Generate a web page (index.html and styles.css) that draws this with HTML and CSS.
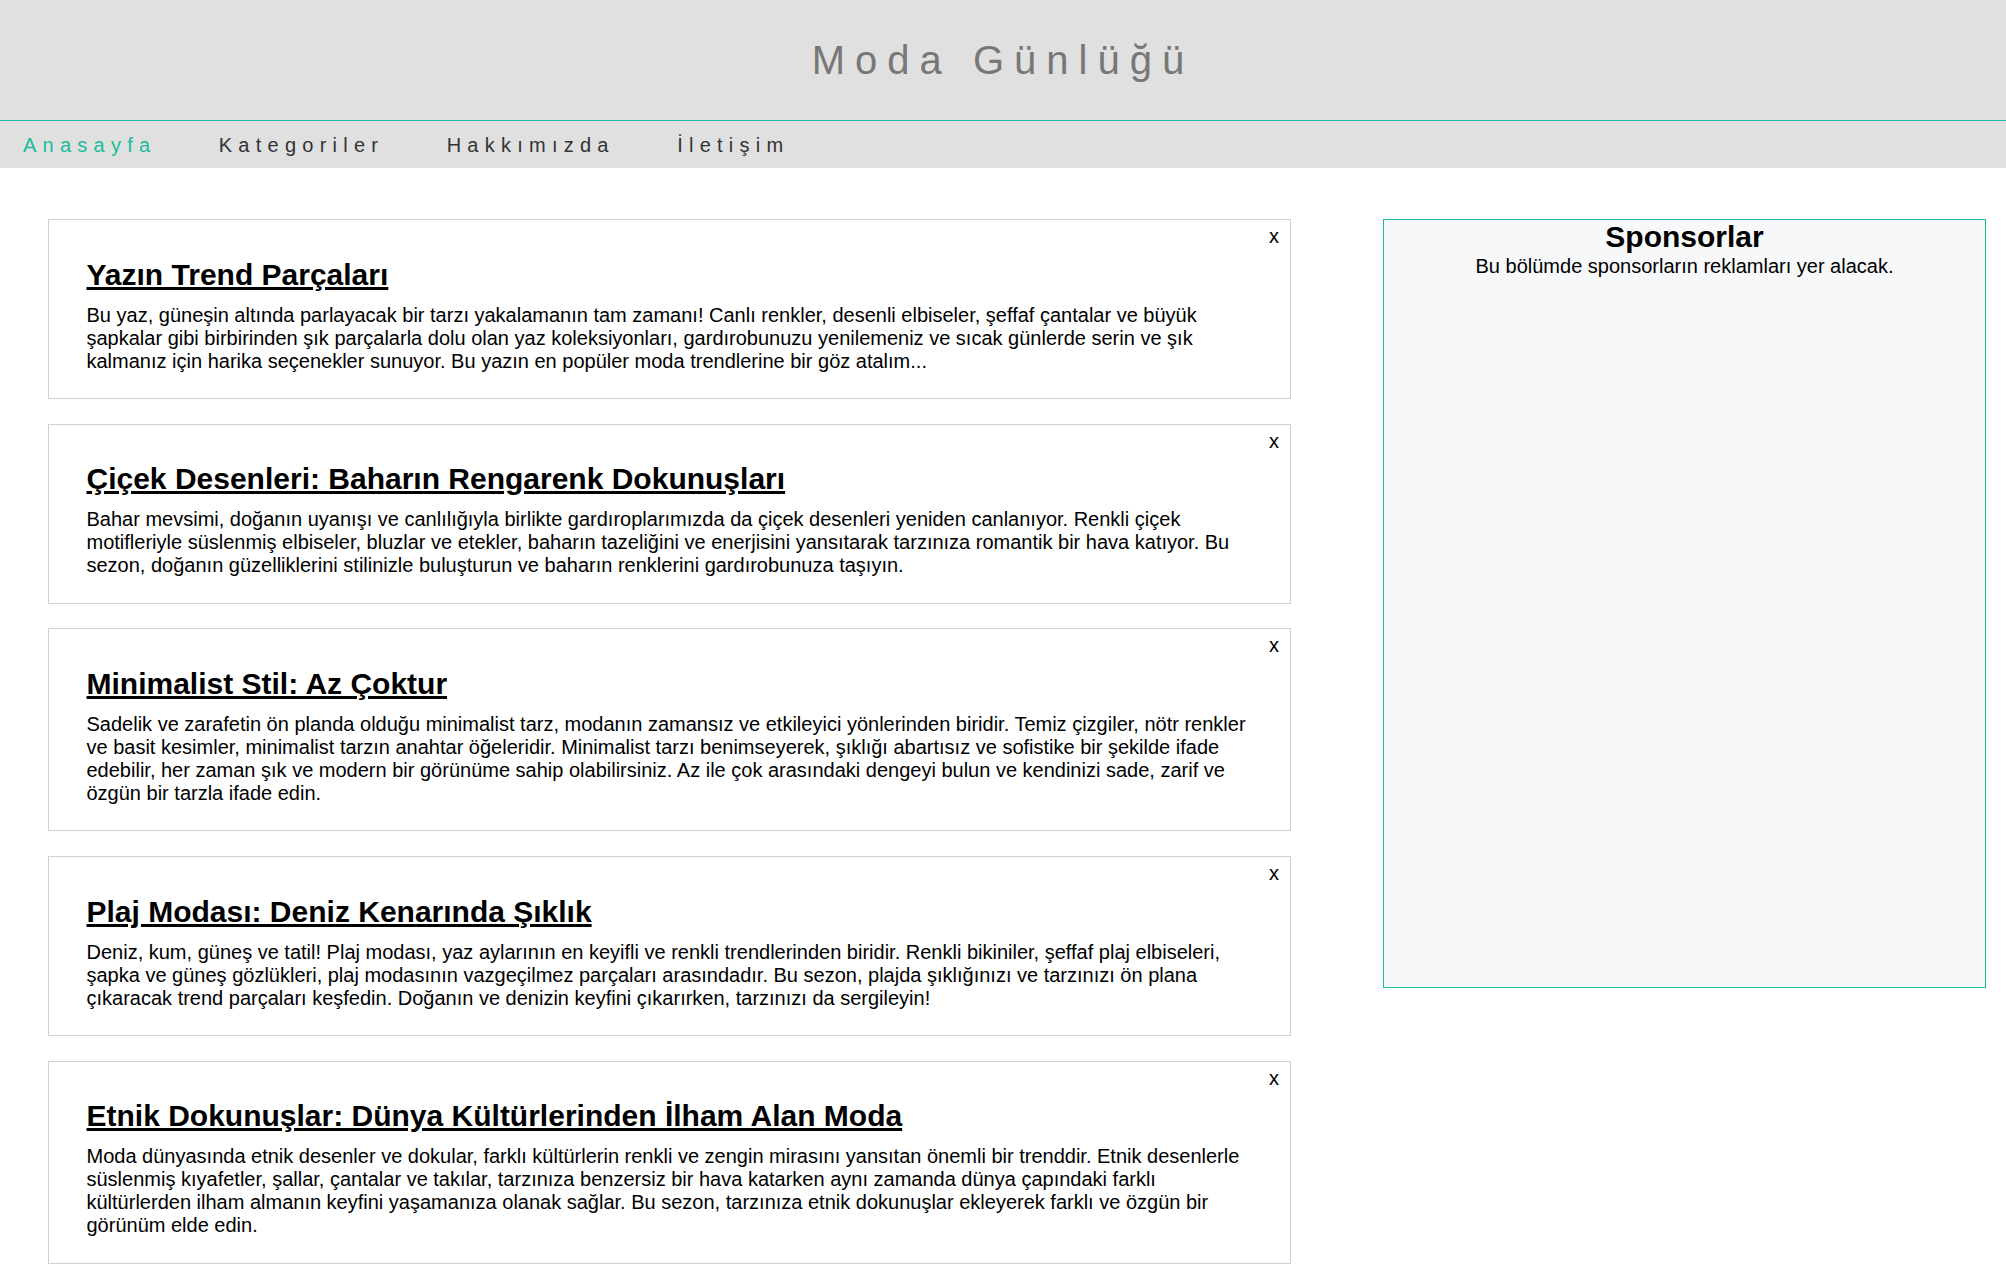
FILE: index.html
```html
<!DOCTYPE html>
<html lang="tr">
<head>
<meta charset="utf-8">
<title>Moda Günlüğü</title>
<link rel="stylesheet" href="styles.css">
</head>
<body>
<header class="site-header">
  <h1 class="site-title">Moda Günlüğü</h1>
</header>
<nav class="nav">
  <a class="nav-link active" href="#">Anasayfa</a>
  <a class="nav-link" href="#">Kategoriler</a>
  <a class="nav-link" href="#">Hakkımızda</a>
  <a class="nav-link" href="#">İletişim</a>
</nav>
<div class="layout">
  <main class="posts">
    <article class="card">
      <span class="close">x</span>
      <h2 class="card-title"><a href="#">Yazın Trend Parçaları</a></h2>
      <p class="card-text">Bu yaz, güneşin altında parlayacak bir tarzı yakalamanın tam zamanı! Canlı renkler, desenli elbiseler, şeffaf çantalar ve büyük şapkalar gibi birbirinden şık parçalarla dolu olan yaz koleksiyonları, gardırobunuzu yenilemeniz ve sıcak günlerde serin ve şık kalmanız için harika seçenekler sunuyor. Bu yazın en popüler moda trendlerine bir göz atalım...</p>
    </article>
    <article class="card">
      <span class="close">x</span>
      <h2 class="card-title"><a href="#">Çiçek Desenleri: Baharın Rengarenk Dokunuşları</a></h2>
      <p class="card-text">Bahar mevsimi, doğanın uyanışı ve canlılığıyla birlikte gardıroplarımızda da çiçek desenleri yeniden canlanıyor. Renkli çiçek motifleriyle süslenmiş elbiseler, bluzlar ve etekler, baharın tazeliğini ve enerjisini yansıtarak tarzınıza romantik bir hava katıyor. Bu sezon, doğanın güzelliklerini stilinizle buluşturun ve baharın renklerini gardırobunuza taşıyın.</p>
    </article>
    <article class="card">
      <span class="close">x</span>
      <h2 class="card-title"><a href="#">Minimalist Stil: Az Çoktur</a></h2>
      <p class="card-text">Sadelik ve zarafetin ön planda olduğu minimalist tarz, modanın zamansız ve etkileyici yönlerinden biridir. Temiz çizgiler, nötr renkler ve basit kesimler, minimalist tarzın anahtar öğeleridir. Minimalist tarzı benimseyerek, şıklığı abartısız ve sofistike bir şekilde ifade edebilir, her zaman şık ve modern bir görünüme sahip olabilirsiniz. Az ile çok arasındaki dengeyi bulun ve kendinizi sade, zarif ve özgün bir tarzla ifade edin.</p>
    </article>
    <article class="card">
      <span class="close">x</span>
      <h2 class="card-title"><a href="#">Plaj Modası: Deniz Kenarında Şıklık</a></h2>
      <p class="card-text">Deniz, kum, güneş ve tatil! Plaj modası, yaz aylarının en keyifli ve renkli trendlerinden biridir. Renkli bikiniler, şeffaf plaj elbiseleri, şapka ve güneş gözlükleri, plaj modasının vazgeçilmez parçaları arasındadır. Bu sezon, plajda şıklığınızı ve tarzınızı ön plana çıkaracak trend parçaları keşfedin. Doğanın ve denizin keyfini çıkarırken, tarzınızı da sergileyin!</p>
    </article>
    <article class="card">
      <span class="close">x</span>
      <h2 class="card-title"><a href="#">Etnik Dokunuşlar: Dünya Kültürlerinden İlham Alan Moda</a></h2>
      <p class="card-text">Moda dünyasında etnik desenler ve dokular, farklı kültürlerin renkli ve zengin mirasını yansıtan önemli bir trenddir. Etnik desenlerle süslenmiş kıyafetler, şallar, çantalar ve takılar, tarzınıza benzersiz bir hava katarken aynı zamanda dünya çapındaki farklı kültürlerden ilham almanın keyfini yaşamanıza olanak sağlar. Bu sezon, tarzınıza etnik dokunuşlar ekleyerek farklı ve özgün bir görünüm elde edin.</p>
    </article>
  </main>
  <aside class="sidebar">
    <h2 class="sidebar-title">Sponsorlar</h2>
    <p class="sidebar-text">Bu bölümde sponsorların reklamları yer alacak.</p>
  </aside>
</div>
</body>
</html>
```
FILE: styles.css
```css
body {
  margin: 0;
  font-family: "Liberation Sans", Arial, sans-serif;
  font-size: 20px;
  color: #000;
  background: #fff;
}

.site-header {
  background: #e0e0e0;
  padding: 37px 0;
  text-align: center;
  border-bottom: 1px solid #1abc9c;
}

.site-title {
  margin: 0;
  font-size: 40px;
  font-weight: normal;
  line-height: 46px;
  letter-spacing: 10px;
  color: #777;
}

.nav {
  background: #e0e0e0;
  padding: 13px 23px 11px;
  display: flex;
  gap: 62.4px;
  line-height: 23px;
}

.nav-link {
  color: #333;
  text-decoration: none;
  letter-spacing: 6.25px;
  font-size: 20px;
}

.nav-link.active {
  color: #1abc9c;
}

.layout {
  display: flex;
  align-items: flex-start;
  gap: 92px;
  padding: 51px 20px 0 48px;
}

.posts {
  width: 1243px;
  flex: none;
}

.card {
  position: relative;
  border: 1px solid #d0d0d0;
  background: #fff;
  padding: 12.5px 37.5px;
  margin-bottom: 24.7px;
}

.card-title {
  margin: 25px 0 11.5px;
  font-size: 30px;
  line-height: 34.5px;
  font-weight: bold;
}

.card-title a {
  color: #000;
  text-decoration: underline;
}

.card-text {
  margin: 0 0 13px;
  line-height: 23px;
}

.close {
  position: absolute;
  top: 5px;
  right: 11px;
  font-size: 20px;
  line-height: 23px;
  cursor: pointer;
}

.sidebar {
  flex: none;
  width: 603px;
  height: 769px;
  box-sizing: border-box;
  border: 1px solid #1abc9c;
  background: #f7f8fa;
  text-align: center;
  padding-top: 0;
}

.sidebar-title {
  margin: 0;
  font-size: 30px;
  line-height: 34.5px;
  font-weight: bold;
}

.sidebar-text {
  margin: 0;
  line-height: 23px;
}
```
